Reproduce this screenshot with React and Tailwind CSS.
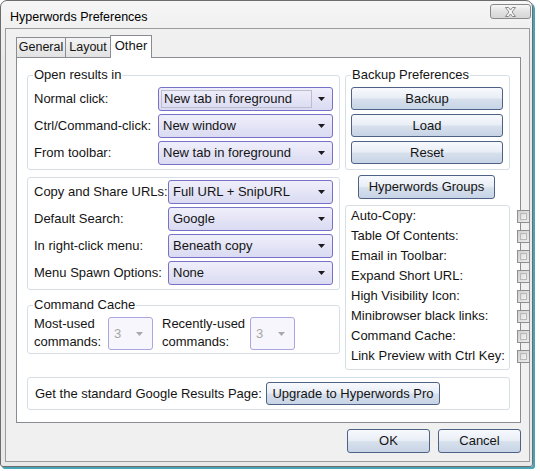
import * as React from 'react';

// small black triangle used by the combo boxes
const Arrow = ({ disabled }) => (
  <svg width="7" height="4" viewBox="0 0 7 4" className="shrink-0">
    <path d="M0 0h7L3.5 4z" fill={disabled ? '#a9a9b4' : '#1c1c1c'} />
  </svg>
);

const Select = ({ value, className, focus }) => (
  <div
    className={`flex items-center h-[24px] rounded-[3px] border border-[#7771c7] bg-[linear-gradient(to_bottom,#efeffb,#dadaf2)] pl-[2px] pr-[7px] ${className}`}
  >
    <div
      className={`flex-1 h-[18px] flex items-center pl-[2px] mr-[6px] whitespace-nowrap ${focus ? 'border border-[#bdbdd0]' : ''}`}
    >
      {value}
    </div>
    <Arrow />
  </div>
);

const DisabledSelect = ({ value }) => (
  <div className="flex items-center justify-between w-[45px] h-[33px] rounded-[3px] border border-[#a9a6e0] bg-[#f6f6fc] pl-[5px] pr-[9px] text-[#a6a6a6]">
    <span>{value}</span>
    <Arrow disabled />
  </div>
);

const Button = ({ children, className }) => (
  <button
    className={`flex items-center justify-center whitespace-nowrap rounded-[3px] border border-[#4d6284] bg-[linear-gradient(to_bottom,#f7f9fc_0%,#e9eef6_47%,#d7e0ec_53%,#c7d4e6_100%)] text-[#141414] ${className}`}
  >
    {children}
  </button>
);

const Group = ({ legend, className, children }) => (
  <div className={`relative rounded-[3px] border border-[#d5dfe5] ${className}`}>
    {legend && (
      <span className="absolute left-[5px] top-[-9px] bg-white px-[1px] leading-[16px] whitespace-nowrap">{legend}</span>
    )}
    {children}
  </div>
);

const Row = ({ label, labelWidth, children }) => (
  <div className="flex items-center">
    <div className={`${labelWidth} whitespace-nowrap`}>{label}</div>
    {children}
  </div>
);

const Checkbox = () => (
  <div className="w-[13px] h-[13px] shrink-0 border border-[#8f8f8f] bg-[linear-gradient(135deg,#d0d0d0,#ececec)] p-[2px]">
    <div className="w-full h-full border border-[#b9b9b9] bg-[linear-gradient(135deg,#dcdcdc,#f3f3f3)]" />
  </div>
);

const CloseGlyph = () => (
  <svg width="13" height="10" viewBox="0 0 13 10">
    <path
      d="M1.5 0.5h3l2 2.6 2-2.6h3L8 5l3.5 4.5h-3l-2-2.6-2 2.6h-3L5 5z"
      fill="#fbfbfb"
      stroke="#7d7d7d"
      strokeWidth="0.9"
      strokeLinejoin="round"
    />
  </svg>
);

const checkLabels = [
  'Auto-Copy:',
  'Table Of Contents:',
  'Email in Toolbar:',
  'Expand Short URL:',
  'High Visibility Icon:',
  'Minibrowser black links:',
  'Command Cache:',
  'Link Preview with Ctrl Key:',
];

export default function App() {
  return (
    <div className="w-[540px] h-[471px] bg-white font-['Liberation_Sans',Arial,sans-serif] text-[13px] text-[#141414]">
      <div className="w-[533px] h-[467px] flex flex-col border border-[#6c6c6c] rounded-t-[7px] rounded-b-[3px] bg-[linear-gradient(to_bottom,#f6f6f6,#e9e9e9_60px,#e9e9e9)] shadow-[2px_2px_0_0_#47a3b6]">
        {/* title bar */}
        <div className="h-[27px] shrink-0 flex items-start justify-between">
          <div className="pl-[9px] pt-[9px] leading-[14px] text-[12.5px] text-black">Hyperwords Preferences</div>
          <div className="mt-[3px] mr-[1px] w-[41px] h-[15px] flex items-center justify-center rounded-[3px] border border-[#8a8a8a] bg-[linear-gradient(to_bottom,#f7f7f7,#e2e2e2_50%,#d6d6d6)]">
            <CloseGlyph />
          </div>
        </div>

        {/* client area */}
        <div className="flex-1 ml-[4px] mr-[2px] mb-[4px] border border-[#9b9b9b] bg-[#f0f0f0] pl-[10px] pr-[8px] pt-[6px]">
          {/* tabs */}
          <div className="flex items-end h-[22px] text-[12.5px]">
            <div className="h-[20px] w-[50px] flex items-center justify-center border border-b-0 border-[#898c95] bg-[linear-gradient(to_bottom,#f4f4f4,#e2e2e2)]">
              General
            </div>
            <div className="h-[20px] w-[46px] -ml-px flex items-center justify-center border border-b-0 border-[#898c95] bg-[linear-gradient(to_bottom,#f4f4f4,#e2e2e2)]">
              Layout
            </div>
            <div className="relative z-10 h-[23px] w-[42px] -ml-px -mb-px flex items-center justify-center pb-[2px] border border-b-0 border-[#898c95] bg-white text-[13px]">
              Other
            </div>
          </div>

          {/* tab panel */}
          <div className="h-[366px] border border-[#898c95] bg-white pt-[17px] pl-[10px] pr-[8px]">
            <div className="flex gap-[5px]">
              {/* left column */}
              <div className="w-[313px] flex flex-col">
                <Group legend="Open results in" className="h-[95px] pt-[11px] pl-[6px] flex flex-col gap-[3px]">
                  <Row label="Normal click:" labelWidth="w-[124px]">
                    <Select value="New tab in foreground" className="w-[175px]" focus />
                  </Row>
                  <Row label="Ctrl/Command-click:" labelWidth="w-[124px]">
                    <Select value="New window" className="w-[175px]" />
                  </Row>
                  <Row label="From toolbar:" labelWidth="w-[124px]">
                    <Select value="New tab in foreground" className="w-[175px]" />
                  </Row>
                </Group>

                <Group className="mt-[7px] h-[113px] pt-[2px] pl-[6px] flex flex-col gap-[3px]">
                  <Row label="Copy and Share URLs:" labelWidth="w-[134px]">
                    <Select value="Full URL + SnipURL" className="w-[165px]" />
                  </Row>
                  <Row label="Default Search:" labelWidth="w-[134px]">
                    <Select value="Google" className="w-[165px]" />
                  </Row>
                  <Row label="In right-click menu:" labelWidth="w-[134px]">
                    <Select value="Beneath copy" className="w-[165px]" />
                  </Row>
                  <Row label="Menu Spawn Options:" labelWidth="w-[134px]">
                    <Select value="None" className="w-[165px]" />
                  </Row>
                </Group>

                <Group legend="Command Cache" className="mt-[15px] h-[49px] pt-[11px] pl-[6px] flex items-start">
                  <div className="w-[74px] leading-[18px] -mt-[2px]">
                    <div>Most-used</div>
                    <div>commands:</div>
                  </div>
                  <DisabledSelect value="3" />
                  <div className="ml-[9px] w-[88px] leading-[18px] -mt-[2px] whitespace-nowrap">
                    <div>Recently-used</div>
                    <div>commands:</div>
                  </div>
                  <DisabledSelect value="3" />
                </Group>
              </div>

              {/* right column */}
              <div className="w-[165px] flex flex-col">
                <Group legend="Backup Preferences" className="h-[95px] pt-[11px] pl-[5px] flex flex-col gap-[4px]">
                  <Button className="w-[152px] h-[23px]">Backup</Button>
                  <Button className="w-[152px] h-[23px]">Load</Button>
                  <Button className="w-[152px] h-[23px]">Reset</Button>
                </Group>

                <Button className="mt-[5px] ml-[13px] w-[137px] h-[24px]">Hyperwords Groups</Button>

                <Group className="mt-[6px] h-[165px] pl-[5px] flex flex-col">
                  {checkLabels.map((label) => (
                    <div key={label} className="w-[179px] h-[20px] flex items-center justify-between whitespace-nowrap">
                      <span>{label}</span>
                      <Checkbox />
                    </div>
                  ))}
                </Group>
              </div>
            </div>

            <Group className="mt-[7px] w-[483px] h-[33px] pl-[7px] flex items-center">
              <div className="w-[231px] whitespace-nowrap">Get the standard Google Results Page:</div>
              <Button className="w-[174px] h-[23px]">Upgrade to Hyperwords Pro</Button>
            </Group>
          </div>

          {/* dialog buttons */}
          <div className="mt-[6px] flex justify-end gap-[8px]">
            <Button className="w-[83px] h-[24px]">OK</Button>
            <Button className="w-[83px] h-[24px]">Cancel</Button>
          </div>
        </div>
      </div>
    </div>
  );
}
